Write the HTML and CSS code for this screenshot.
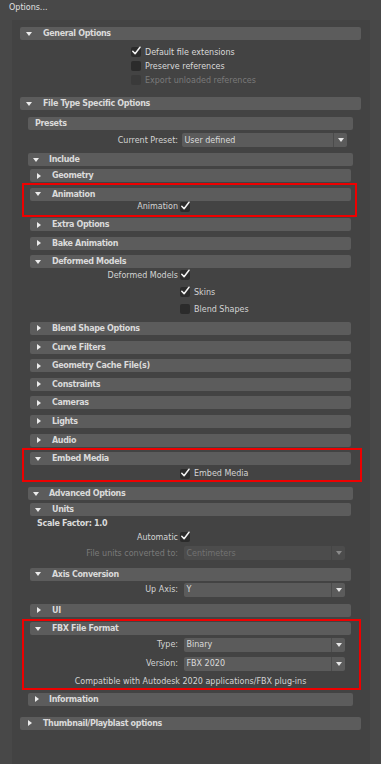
FILE: index.html
```html
<!DOCTYPE html>
<html>
<head>
<meta charset="utf-8">
<title>Options</title>
<link rel="stylesheet" href="styles.css">
</head>
<body>
<div class="title">Options...</div>
<div class="scroll">
  <section class="s1">
    <div class="hdr"><i class="tri down"></i><span>General Options</span></div>
    <div class="body gen">
      <div class="crow"><span class="cb on"><svg viewBox="0 0 10 10"><path d="M1.8 5.2 L4.1 7.8 L9 1.2"/></svg></span><span>Default file extensions</span></div>
      <div class="crow"><span class="cb"></span><span>Preserve references</span></div>
      <div class="crow dis"><span class="cb"></span><span>Export unloaded references</span></div>
    </div>
  </section>

  <section class="s1 gap1">
    <div class="hdr"><i class="tri down"></i><span>File Type Specific Options</span></div>
    <div class="body ft">
      <section class="s2 presets">
        <div class="hdr"><span class="notri">Presets</span></div>
        <div class="body">
          <div class="frow first"><span class="lab">Current Preset:</span><div class="dd"><span class="val">User defined</span><span class="arr"><i></i></span></div></div>
        </div>
      </section>

      <section class="s2 include">
        <div class="hdr"><i class="tri down"></i><span>Include</span></div>
        <div class="body l3">
          <section class="s3"><div class="hdr"><i class="tri right"></i><span>Geometry</span></div></section>
          <section class="s3 hl hl-anim">
            <div class="hdr"><i class="tri down"></i><span>Animation</span></div>
            <div class="frow short"><span class="lab">Animation</span><span class="cb on"><svg viewBox="0 0 10 10"><path d="M1.8 5.2 L4.1 7.8 L9 1.2"/></svg></span></div>
          </section>
          <section class="s3"><div class="hdr"><i class="tri right"></i><span>Extra Options</span></div></section>
          <section class="s3"><div class="hdr"><i class="tri right"></i><span>Bake Animation</span></div></section>
          <section class="s3">
            <div class="hdr"><i class="tri down"></i><span>Deformed Models</span></div>
            <div class="frow"><span class="lab">Deformed Models</span><span class="cb on"><svg viewBox="0 0 10 10"><path d="M1.8 5.2 L4.1 7.8 L9 1.2"/></svg></span></div>
            <div class="frow sp3"><span class="lab"></span><span class="cb on"><svg viewBox="0 0 10 10"><path d="M1.8 5.2 L4.1 7.8 L9 1.2"/></svg></span><span class="after">Skins</span></div>
            <div class="frow sp3"><span class="lab"></span><span class="cb"></span><span class="after">Blend Shapes</span></div>
          </section>
          <section class="s3"><div class="hdr"><i class="tri right"></i><span>Blend Shape Options</span></div></section>
          <section class="s3"><div class="hdr"><i class="tri right"></i><span>Curve Filters</span></div></section>
          <section class="s3"><div class="hdr"><i class="tri right"></i><span>Geometry Cache File(s)</span></div></section>
          <section class="s3"><div class="hdr"><i class="tri right"></i><span>Constraints</span></div></section>
          <section class="s3"><div class="hdr"><i class="tri right"></i><span>Cameras</span></div></section>
          <section class="s3"><div class="hdr"><i class="tri right"></i><span>Lights</span></div></section>
          <section class="s3"><div class="hdr"><i class="tri right"></i><span>Audio</span></div></section>
          <section class="s3 hl hl-embed">
            <div class="hdr"><i class="tri down"></i><span>Embed Media</span></div>
            <div class="frow tall"><span class="lab"></span><span class="cb on"><svg viewBox="0 0 10 10"><path d="M1.8 5.2 L4.1 7.8 L9 1.2"/></svg></span><span class="after">Embed Media</span></div>
          </section>
        </div>
      </section>

      <section class="s2 adv">
        <div class="hdr"><i class="tri down"></i><span>Advanced Options</span></div>
        <div class="body l3">
          <section class="s3 units">
            <div class="hdr"><i class="tri down"></i><span>Units</span></div>
            <div class="frow"><span class="scale">Scale Factor: 1.0</span></div>
            <div class="frow"><span class="lab">Automatic</span><span class="cb on"><svg viewBox="0 0 10 10"><path d="M1.8 5.2 L4.1 7.8 L9 1.2"/></svg></span></div>
            <div class="frow sp2 dis"><span class="lab">File units converted to:</span><div class="dd off"><span class="val">Centimeters</span><span class="arr"><i></i></span></div></div>
          </section>
          <section class="s3 axis">
            <div class="hdr"><i class="tri down"></i><span>Axis Conversion</span></div>
            <div class="frow sp2"><span class="lab">Up Axis:</span><div class="dd"><span class="val">Y</span><span class="arr"><i></i></span></div></div>
          </section>
          <section class="s3"><div class="hdr"><i class="tri right"></i><span>UI</span></div></section>
          <section class="s3 hl hl-fbx">
            <div class="hdr"><i class="tri down"></i><span>FBX File Format</span></div>
            <div class="frow type"><span class="lab">Type:</span><div class="dd"><span class="val">Binary</span><span class="arr"><i></i></span></div></div>
            <div class="frow ver"><span class="lab">Version:</span><div class="dd"><span class="val">FBX 2020</span><span class="arr"><i></i></span></div></div>
            <div class="frow compat">Compatible with Autodesk 2020 applications/FBX plug-ins</div>
          </section>
        </div>
      </section>

      <section class="s2 info">
        <div class="hdr"><i class="tri right"></i><span>Information</span></div>
      </section>
    </div>
  </section>

  <section class="s1 gap1">
    <div class="hdr"><i class="tri right"></i><span>Thumbnail/Playblast options</span></div>
  </section>
</div>
</body>
</html>
```

FILE: styles.css
```css
* { box-sizing: border-box; margin: 0; padding: 0; }

html, body { height: 100%; }

body {
  background: #484848;
  font-family: "DejaVu Sans", "Liberation Sans", sans-serif;
  font-size: 8px;
  color: #d4d4d4;
  overflow: hidden;
}

.title {
  height: 20px;
  padding: 3px 0 0 9px;
  line-height: 9px;
  color: #e0e0e0;
}

.scroll {
  margin: 0 11px 0 12px;
  height: 744px;
  background: #434343;
  padding: 7px 9px 0 8px;
}

section { display: block; }

.hdr {
  height: 13px;
  background: #5c5c5c;
  border-radius: 2px;
  display: flex;
  align-items: center;
  font-weight: bold;
  letter-spacing: -0.35px;
  color: #dadada;
  white-space: nowrap;
}

.tri {
  flex: none;
  width: 6px;
  height: 6px;
  margin-left: 5px;
  margin-right: 11px;
  position: relative;
}
.tri::before {
  content: "";
  position: absolute;
}
.tri.down::before {
  left: 0;
  top: 1px;
  border-left: 3px solid transparent;
  border-right: 3px solid transparent;
  border-top: 4px solid #ececec;
}
.tri.right::before {
  left: 2px;
  top: 0;
  border-top: 3px solid transparent;
  border-bottom: 3px solid transparent;
  border-left: 4px solid #ececec;
}

.s1 > .hdr .tri { margin-left: 6px; margin-right: 11px; }
.s2 > .hdr .tri { margin-left: 5px; margin-right: 10px; }
.notri { padding-left: 7px; }

.gap1 { margin-top: 10px; }

/* General options */
.gen { padding-top: 5px; }
.crow {
  height: 14px;
  display: flex;
  align-items: center;
  padding-left: 111px;
  color: #dadada;
}
.crow .cb { margin-right: 4px; }
.dis { color: #7a7a7a; }
.crow.dis .cb { background: #3a3a3a; }

.cb {
  flex: none;
  width: 10px;
  height: 10px;
  background: #2b2b2b;
  border-radius: 2px;
  position: relative;
}
.cb svg {
  position: absolute;
  left: 0;
  top: -1px;
  width: 10px;
  height: 10px;
  overflow: visible;
}
.cb svg path {
  fill: none;
  stroke: #f2f2f2;
  stroke-width: 1.5;
  stroke-linecap: round;
  stroke-linejoin: round;
}

/* File type body */
.ft { padding: 0 8px 1px; }
.presets { margin-top: 7px; }
.include { margin-top: 6px; }
.adv { margin-top: 5px; }
.info { margin-top: 4px; }

.l3 { padding: 0 2px; }
.l3 > .s3:first-child { margin-top: 3px; }
.s3 + .s3 { margin-top: 5.6px; }

.frow {
  height: 14px;
  display: flex;
  align-items: center;
  white-space: nowrap;
}
.frow .lab {
  flex: none;
  width: 150px;
  padding-right: 2px;
  text-align: right;
}
.presets .frow .lab { width: 152px; }
.presets .frow.first { margin-top: 3px; }
.frow.short { height: 12px; }
.frow.tall { height: 17px; }
.frow.sp3 { margin-top: 3px; }
.frow.sp2 { margin-top: 2px; }
.frow .after { margin-left: 4px; }

.dd {
  flex: 1;
  height: 14px;
  margin-left: 3.5px;
  margin-right: 6px;
  background: #5b5b5b;
  border-radius: 2px;
  display: flex;
  align-items: center;
  color: #dcdcdc;
}
.presets .dd { margin-left: 1.5px; }
.dd .val { flex: 1; padding-left: 3px; }
.dd .arr {
  flex: none;
  width: 14px;
  height: 14px;
  border-left: 1px solid #4b4b4b;
  display: flex;
  align-items: center;
  justify-content: center;
}
.dd .arr i {
  display: block;
  border-left: 3.5px solid transparent;
  border-right: 3.5px solid transparent;
  border-top: 4px solid #e6e6e6;
}
.dd.off { background: #4c4c4c; color: #727272; }
.dd.off .arr { border-left-color: #454545; }
.dd.off .arr i { border-top-color: #8a8a8a; }

.scale {
  padding-left: 7px;
  font-weight: bold;
  letter-spacing: -0.3px;
  color: #dadada;
}

.units { padding-bottom: 2.2px; }
.axis { padding-bottom: 1.4px; }
.frow.type { margin-top: 2.4px; }
.frow.ver { margin-top: 5px; }
.frow.compat {
  margin-top: 4px;
  justify-content: center;
}

/* highlighted groups (annotation boxes) */
.hl { position: relative; }
.hl::after {
  content: "";
  position: absolute;
  border: 2px solid #ee0000;
  pointer-events: none;
}
.hl-anim::after { left: -8px; right: -6px; top: -5px; bottom: -4px; }
.hl-embed::after { left: -8px; right: -11px; top: -4px; bottom: 0; }
.hl-fbx::after { left: -8px; right: -10px; top: -3px; bottom: -1px; }
```
